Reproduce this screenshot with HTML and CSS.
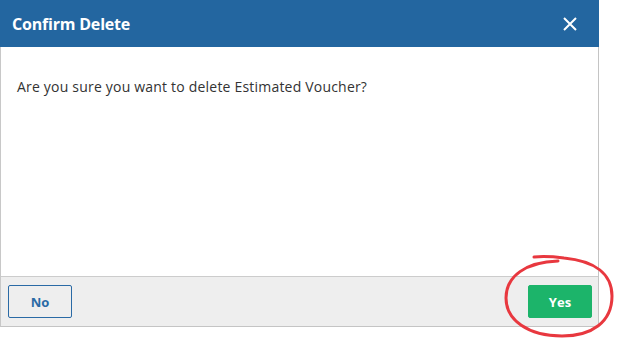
FILE: index.html
```html
<!DOCTYPE html>
<html>
<head>
<meta charset="utf-8">
<link rel="stylesheet" href="styles.css">
</head>
<body>
<div class="page">
  <div class="dialog">
    <div class="header">
      <span class="title">Confirm Delete</span>
      <svg class="close" width="16" height="16" viewBox="0 0 16 16"><path d="M2 2L14 14M14 2L2 14" stroke="#fff" stroke-width="2" fill="none"/></svg>
    </div>
    <div class="body">Are you sure you want to delete Estimated Voucher?</div>
    <div class="footer">
      <button class="btn btn-no">No</button>
      <button class="btn btn-yes">Yes</button>
    </div>
  </div>
  <svg class="circle" width="130" height="100" viewBox="0 0 130 100">
    <path d="M34 5 C 45 4, 56 5, 64 6 C 95 9, 112 22, 112 44 C 112 70, 92 84, 62 84 C 28 84, 6 68, 6 46 C 6 24, 26 10, 58 9" stroke="#e8383f" stroke-width="3" fill="none" stroke-linecap="round"/>
  </svg>
</div>
</body>
</html>
```
FILE: styles.css
```css
html, body { margin: 0; padding: 0; background: #fff; }
.page { position: relative; width: 620px; height: 354px; font-family: "Open Sans", "Noto Sans", sans-serif; }
.dialog { width: 599px; height: 327px; border: 1px solid #c4c4c4; border-top: none; border-left-color: #c8c8c8; display: flex; flex-direction: column; box-sizing: border-box; }
.header { height: 47px; background: #2366a0; display: flex; align-items: center; justify-content: space-between; padding: 0 21px 0 12px; margin: 0 -1px 0 -1px; }
.title { color: #fff; font-weight: 700; font-size: 16px; letter-spacing: -0.2px; }
.close { display: block; }
.body { flex: 1; padding: 30px 16px 0; font-size: 14px; letter-spacing: 0.2px; color: #333; }
.footer { height: 50px; background: #eeeeee; border-top: 1px solid #cccccc; display: flex; align-items: center; justify-content: space-between; padding: 0 6px 0 7px; box-sizing: border-box; }
.btn { width: 64px; height: 33px; font-family: inherit; font-size: 13px; font-weight: 700; border-radius: 2px; cursor: pointer; }
.btn-no { background: #eeeeee; border: 1px solid #2a6aa5; color: #2a6aa5; }
.btn-yes { background: #1cb46a; border: 1px solid #1cb46a; color: #fff; }
.circle { position: absolute; left: 500px; top: 252px; }
```
